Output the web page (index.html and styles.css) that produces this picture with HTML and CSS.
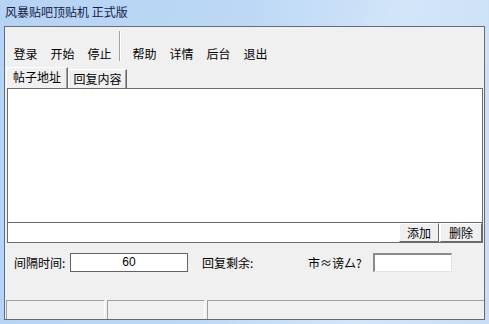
FILE: index.html
```
<!DOCTYPE html>
<html lang="zh-CN">
<head>
    <meta charset="UTF-8">
    <title>风暴贴吧顶贴机 正式版</title>
    <link rel="stylesheet" href="styles.css">
</head>
<body>
    <div class="titlebar">风暴贴吧顶贴机 正式版</div>
    <div class="client">
        <div class="toolbar">
            <span class="tbtn">登录</span>
            <span class="tbtn">开始</span>
            <span class="tbtn">停止</span>
            <span class="tsep"></span>
            <span class="tbtn">帮助</span>
            <span class="tbtn">详情</span>
            <span class="tbtn">后台</span>
            <span class="tbtn">退出</span>
        </div>
        <div class="tabs">
            <div class="tab active">帖子地址</div>
            <div class="tab">回复内容</div>
        </div>
        <div class="panel">
            <div class="urllist"></div>
            <div class="addrow">
                <div class="addinput"></div>
                <span class="btn btn-add">添加</span>
                <span class="btn btn-del">删除</span>
            </div>
        </div>
        <div class="optrow">
            <span class="lbl lbl1">间隔时间:</span>
            <span class="field field1">60</span>
            <span class="lbl lbl2">回复剩余:</span>
            <span class="lbl lbl3">市≈谤厶?</span>
            <span class="field field2"></span>
        </div>
        <div class="spacer"></div>
        <div class="statusbar">
            <div class="spanel sp1"></div>
            <div class="spanel sp2"></div>
            <div class="spanel sp3"></div>
        </div>
    </div>
</body>
</html>
```

FILE: styles.css
```
* {
    box-sizing: border-box;
}

body {
    margin: 0;
    width: 489px;
    height: 324px;
    overflow: hidden;
    font-family: "Noto Sans CJK SC", "DejaVu Sans", sans-serif;
    font-size: 12px;
    color: #000;
    background: linear-gradient(100deg, #b6d3f4 0%, #bcd8f6 45%, #d3e5f9 75%, #c9def6 100%);
}

.titlebar {
    height: 26px;
    padding-left: 5px;
    line-height: 24px;
    color: #141c48;
}

.client {
    margin-left: 4px;
    width: 481px;
    height: 294px;
    background-color: #f0f0f0;
    border: 1px solid #646b76;
    display: flex;
    flex-direction: column;
}

/* toolbar */
.toolbar {
    height: 40px;
    display: flex;
    align-items: flex-end;
    padding: 0 0 5px 2px;
}

.tbtn {
    width: 37px;
    text-align: center;
    line-height: 16px;
}

.tsep {
    align-self: flex-start;
    margin: 4px 5px 0 1px;
    width: 2px;
    height: 30px;
    border-left: 1px solid #a0a0a0;
    border-right: 1px solid #fff;
}

/* tabs */
.tabs {
    height: 21px;
    display: flex;
    align-items: flex-end;
    padding-left: 1px;
}

.tab {
    width: 59px;
    height: 19px;
    line-height: 17px;
    text-align: center;
    border-top: 1px solid #fff;
    border-left: 1px solid #fff;
    border-right: 1px solid #696969;
    box-shadow: inset -1px 0 0 #a0a0a0;
}

.tab.active {
    width: 62px;
    height: 21px;
    line-height: 18px;
    padding-bottom: 2px;
}

/* list panel */
.panel {
    margin-left: 2px;
    width: 476px;
    height: 155px;
    border: 1px solid #6b6b6b;
    background-color: #fff;
    display: flex;
    flex-direction: column;
}

.urllist {
    height: 134px;
    border-bottom: 1px solid #6b6b6b;
}

.addrow {
    height: 19px;
    display: flex;
}

.addinput {
    flex: 1;
}

.btn {
    height: 19px;
    line-height: 17px;
    text-align: center;
    background-color: #f0f0f0;
    border-top: 1px solid #fff;
    border-left: 1px solid #fff;
    border-right: 1px solid #696969;
    border-bottom: 1px solid #696969;
}

.btn-add {
    width: 40px;
    margin-right: 1px;
}

.btn-del {
    width: 42px;
}

/* options row */
.optrow {
    margin-top: 10px;
    height: 19px;
    display: flex;
    align-items: center;
    padding-left: 9px;
}

.lbl {
    line-height: 19px;
}

.lbl1 {
    width: 56px;
}

.lbl2 {
    margin-left: 14px;
    width: 106px;
}

.lbl3 {
    width: 65px;
}

.field {
    height: 19px;
    background-color: #fff;
    line-height: 17px;
    text-align: center;
    font-family: "Liberation Sans", Arial, sans-serif;
}

.field1 {
    width: 118px;
    border: 1px solid #646464;
}

.field2 {
    width: 79px;
    border-top: 2px solid #8a8a8a;
    border-left: 2px solid #8a8a8a;
    border-right: 1px solid #e3e3e3;
    border-bottom: 1px solid #e3e3e3;
}

.spacer {
    flex: 1;
}

/* status bar */
.statusbar {
    height: 19px;
    display: flex;
    padding-left: 1px;
}

.spanel {
    height: 19px;
    border-top: 1px solid #a0a0a0;
    border-left: 1px solid #a0a0a0;
    border-right: 1px solid #fff;
}

.sp1 {
    width: 99px;
    margin-right: 2px;
}

.sp2 {
    width: 98px;
    margin-right: 2px;
}

.sp3 {
    flex: 1;
    border-right: none;
}
```
